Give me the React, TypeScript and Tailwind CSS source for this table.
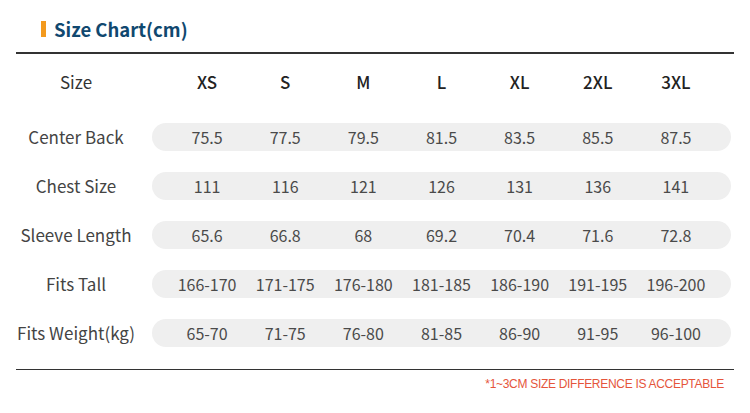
import React from "react";

const sizes = ["XS", "S", "M", "L", "XL", "2XL", "3XL"];
const rows: { label: string; values: string[] }[] = [
  { label: "Center Back", values: ["75.5", "77.5", "79.5", "81.5", "83.5", "85.5", "87.5"] },
  { label: "Chest Size", values: ["111", "116", "121", "126", "131", "136", "141"] },
  { label: "Sleeve Length", values: ["65.6", "66.8", "68", "69.2", "70.4", "71.6", "72.8"] },
  { label: "Fits Tall", values: ["166-170", "171-175", "176-180", "181-185", "186-190", "191-195", "196-200"] },
  { label: "Fits Weight(kg)", values: ["65-70", "71-75", "76-80", "81-85", "86-90", "91-95", "96-100"] },
];

const font = { fontFamily: '"Noto Sans CJK SC", "Noto Sans", sans-serif' };

export default function App() {
  return (
    <div className="w-[750px] h-[413px] bg-white overflow-hidden" style={font}>
      <div className="flex items-center h-[52px] pl-[41px] pt-[6px]">
        <div className="w-[5px] h-[16px] bg-[#f39a1e]" />
        <div className="ml-[8px] text-[18.5px] font-bold text-[#10486f] leading-none">Size Chart(cm)</div>
      </div>
      <div className="mx-[16px] h-[1.5px] bg-[#333]" />
      <div className="flex items-center h-[28px] mt-[14px]">
        <div className="w-[152px] text-center text-[17px] text-[#333]">Size</div>
        <div className="grid grid-cols-7 w-[579px] px-[16px]">
          {sizes.map((s) => (
            <div key={s} className="text-center text-[17px] font-medium text-[#222]">{s}</div>
          ))}
        </div>
      </div>
      <div className="flex flex-col gap-[21px] mt-[27px]">
        {rows.map((r) => (
          <div key={r.label} className="flex items-center h-[28px]">
            <div className="w-[152px] text-center text-[17px] text-[#444] whitespace-nowrap">{r.label}</div>
            <div className="grid grid-cols-7 items-center w-[579px] h-[28px] px-[16px] rounded-full bg-[#efefef]">
              {r.values.map((v, i) => (
                <div key={i} className="text-center text-[16px] text-[#4a4a4a] whitespace-nowrap">{v}</div>
              ))}
            </div>
          </div>
        ))}
      </div>
      <div className="mx-[16px] mt-[22px] h-[1.5px] bg-[#333]" />
      <div className="flex justify-end pr-[26px] mt-[8px]">
        <div
          className="text-[12px] text-[#e5553b] leading-none tracking-[-0.3px]"
          style={{ fontFamily: '"Liberation Sans", Arial, sans-serif' }}
        >
          *1~3CM SIZE DIFFERENCE IS ACCEPTABLE
        </div>
      </div>
    </div>
  );
}
